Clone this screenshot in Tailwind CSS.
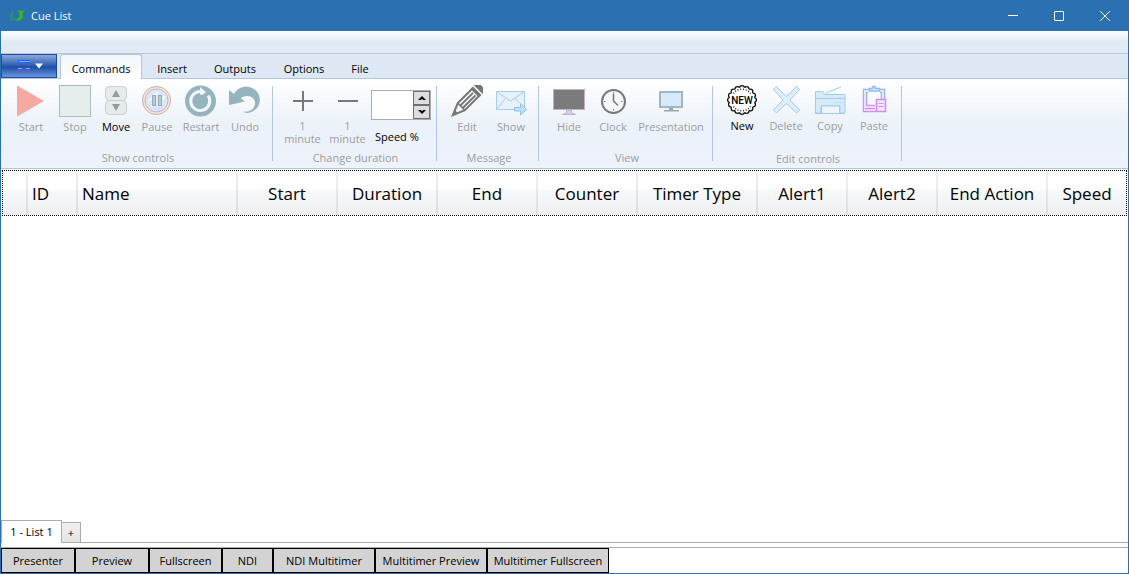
<!DOCTYPE html>
<html lang="en">
<head>
    <meta charset="UTF-8">
    <meta name="viewport" content="width=device-width, initial-scale=1.0">
    <title>Cue List</title>
    <script src="https://cdn.jsdelivr.net/npm/@tailwindcss/browser@4"></script>
</head>
<body class="flex min-h-screen flex-col border-x border-b border-[#2b70b1] bg-white font-['Open_Sans',sans-serif] text-[11px] leading-4 text-black">

<!-- Title bar -->
<header class="-mx-px flex h-[31px] items-center bg-[#2b70b1] pl-2 text-white">
    <svg class="h-4 w-4" viewBox="0 0 16 16"><path d="M4.500 2.500Q.5 7 3 12.500h5v-2H5Q3.500 7 6 3z" fill="#2e9070"/><path d="M9 2.500h7l-1.500 4 .5 3-3.500 3H8l1.500-2.500 2-1.500-.5-4z" fill="#35b81c"/></svg>
    <h1 class="ml-[7px] flex-1">Cue List</h1>
    <button class="flex h-full w-[46px] items-center justify-center" aria-label="Minimize"><svg class="h-3 w-3" viewBox="0 0 12 12"><path d="M1 5.500h10" stroke="#fff"/></svg></button>
    <button class="flex h-full w-[46px] items-center justify-center" aria-label="Maximize"><svg class="h-3 w-3" viewBox="0 0 12 12"><rect x="1.500" y="1.500" width="9" height="9" rx=".5" fill="none" stroke="#fff"/></svg></button>
    <button class="mr-px flex h-full w-[46px] items-center justify-center" aria-label="Close"><svg class="h-3 w-3" viewBox="0 0 12 12"><path d="M1 1l10 10M11 1L1 11" stroke="#fff"/></svg></button>
</header>

<div class="h-[23px] border-b border-[#b3c6dd] bg-linear-to-b from-white via-[#e1eaf5] to-[#e3e9f5]"></div>

<!-- Ribbon tabs -->
<nav class="flex h-[25px] items-end border-b border-[#b3c6dd] bg-[#dde8f4]">
    <button class="mr-[3px] flex h-6 w-14 items-center justify-center gap-1 self-start border border-[#1a4ba6] bg-linear-to-b from-[#8ea8dc] via-[#1c50a8] via-55% to-[#6b96dd]" aria-label="Application menu">
        <svg class="h-4 w-4" viewBox="0 0 16 16" fill="none"><path d="M3 3.500h12" stroke="#1d62f5" stroke-width="3"/><path d="M4 3.500h11M3 10.500h4m4 0h4" stroke="#75b5ff"/><path d="M2 6.500h2M13 6.500h2M2 12.500h5m3 0h5M7 10l2 3 2-3" stroke="#834bd3"/></svg>
        <svg class="h-2 w-2" viewBox="0 0 8 8"><path d="M0 1.500h8l-4 5z" fill="#fff"/></svg>
    </button>
    <button class="-mb-px h-[25px] w-[82px] rounded-t-[3px] border border-b-0 border-[#b3c6dd] bg-linear-to-b from-[#f2f7fc] to-white pt-1">Commands</button>
    <button class="h-[22px] w-[60px] pt-1">Insert</button>
    <button class="h-[22px] w-[66px] pt-1">Outputs</button>
    <button class="h-[22px] w-[72px] pt-1">Options</button>
    <button class="h-[22px] w-10 pt-1">File</button>
</nav>

<!-- Ribbon -->
<div class="flex h-[90px] border-b border-[#b3c6dd] bg-linear-to-b from-white via-[#ecf2f9] via-50% to-[#edf2fb] pt-1.5 text-[#9d9d9d]">

    <section class="relative flex flex-col justify-between pr-[6px] pl-2 after:absolute after:top-px after:right-0 after:h-[75px] after:w-px after:bg-[#b3c6dd]">
        <div class="flex items-start">
            <button class="flex w-11 flex-col items-center gap-0.5" disabled>
                <svg class="h-8 w-8" viewBox="0 0 32 32"><path d="M2 .5v31L29 16z" fill="#f6a9a1"/></svg>
                <span>Start</span>
            </button>
            <button class="flex w-11 flex-col items-center gap-0.5" disabled>
                <svg class="h-8 w-8" viewBox="0 0 32 32"><rect x=".5" y=".5" width="31" height="31" fill="#e5eeec" stroke="#acbdbf"/></svg>
                <span>Stop</span>
            </button>
            <button class="flex w-[38px] flex-col items-center gap-0.5 text-black">
                <svg class="h-8 w-8" viewBox="0 0 32 32"><g fill="#e5ecea" stroke="#c3cfd1"><rect x="5.500" y="1.500" width="21" height="14" rx="4"/><rect x="5.500" y="15.500" width="21" height="14" rx="4"/></g><path d="M12 12l4-7 4 7zM12 19h8l-4 7z" fill="#999"/></svg>
                <span>Move</span>
            </button>
            <button class="flex w-11 flex-col items-center gap-0.5" disabled>
                <svg class="h-8 w-8" viewBox="0 0 32 32"><circle cx="15.500" cy="15.500" r="14" fill="#fbe8ca" stroke="#c8abb7"/><circle cx="15.500" cy="15.500" r="11.500" fill="#d8eafa" stroke="#c3b1cb"/><path d="M8 16L17 7M10 22l3-3M21 14l3-3" stroke="#f4faff" stroke-width="2"/><path d="M8 20a9 9 0 0 0 15 0" fill="none" stroke="#bdaac9" stroke-dasharray="1 2.500"/><g fill="#aad6c7" stroke="#aaa1bd"><rect x="11.500" y="10.500" width="3" height="10"/><rect x="17.500" y="10.500" width="3" height="10"/></g></svg>
                <span>Pause</span>
            </button>
            <button class="flex w-11 flex-col items-center gap-0.5" disabled>
                <svg class="h-8 w-8" viewBox="0 0 32 32"><circle cx="15.500" cy="16" r="15.500" fill="#96b4be"/><path d="M23 10.500A9.500 9.500 0 1 1 15 6.500" fill="none" stroke="#f3f7fb" stroke-width="3"/><path d="M15 2l6 5-6 5.500z" fill="#f3f7fb"/><circle cx="15.500" cy="16.500" r="7" fill="#96b4be"/></svg>
                <span>Restart</span>
            </button>
            <button class="flex w-11 flex-col items-center gap-0.5" disabled>
                <svg class="h-8 w-8" viewBox="0 0 32 32"><path d="M0 5l5 4C9 2 17 0 24 3.500c9 5 9 17 1 22-4 3-9 3-11 1 6 1 11-2 12-7 1-6-5-10-11-8-2 .5-3 1.500-3 2l4 3L0 20z" fill="#96b4be"/></svg>
                <span>Undo</span>
            </button>
        </div>
        <h2 class="mb-0.5 text-center">Show controls</h2>
    </section>

    <section class="relative flex flex-col justify-between pr-[6px] pl-[7px] after:absolute after:top-px after:right-0 after:h-[75px] after:w-px after:bg-[#b3c6dd]">
        <div class="flex items-start">
            <button class="flex w-[45px] flex-col items-center gap-0.5" disabled>
                <svg class="h-8 w-8" viewBox="0 0 32 32"><path d="M6 16h20M16 6v20" stroke="#787878" stroke-width="2"/></svg>
                <span class="leading-[13px]">1<br>minute</span>
            </button>
            <button class="flex w-[45px] flex-col items-center gap-0.5" disabled>
                <svg class="h-8 w-8" viewBox="0 0 32 32"><path d="M6 16h20" stroke="#787878" stroke-width="2"/></svg>
                <span class="leading-[13px]">1<br>minute</span>
            </button>
            <div class="flex w-[61px] flex-col items-end pt-[5px] text-black">
                <div class="flex h-[30px] w-[60px] border border-[#abadb3] bg-white">
                    <input id="speed" type="text" class="min-w-0 flex-1 px-1 outline-none">
                    <div class="flex w-[17px] flex-col">
                        <button class="flex flex-1 items-center justify-center border border-[#707070] bg-[#ddd]" aria-label="Increase speed"><svg class="h-2 w-2" viewBox="0 0 8 8"><path d="M0 6l4-4 4 4H5.500L4 5 2.500 6z"/></svg></button>
                        <button class="flex flex-1 items-center justify-center border border-[#707070] bg-[#ddd]" aria-label="Decrease speed"><svg class="h-2 w-2" viewBox="0 0 8 8"><path d="M0 2l4 4 4-4H5.500L4 3 2.500 2z"/></svg></button>
                    </div>
                </div>
                <label for="speed" class="mt-[9px] w-[60px] pl-1">Speed %</label>
            </div>
        </div>
        <h2 class="mb-0.5 text-center">Change duration</h2>
    </section>

    <section class="relative flex flex-col justify-between pr-[6px] pl-2 after:absolute after:top-px after:right-0 after:h-[75px] after:w-px after:bg-[#b3c6dd]">
        <div class="flex items-start">
            <button class="flex w-11 flex-col items-center gap-0.5" disabled>
                <svg class="h-8 w-8" viewBox="0 0 32 32"><g transform="rotate(45 16 16)"><path d="M11 4h10v20l-5 12-5-12z" fill="#f3f6fa" stroke="#767676" stroke-width="2"/><path d="M14.500 6v18M18 6v18" stroke="#767676" stroke-width="2"/><path d="M11 24h10" fill="none" stroke="#767676" stroke-width="1.500"/><path d="M10 1.500h12V4H10zM14 31h4l-2 5zM10 0v-2q0-3 3-3h6q3 0 3 3v2z" fill="#767676"/></g></svg>
                <span>Edit</span>
            </button>
            <button class="flex w-11 flex-col items-center gap-0.5" disabled>
                <svg class="h-8 w-8" viewBox="0 0 32 32"><path d="M1.500 6.500h28v18h-28z" fill="#e6f1fb" stroke="#a6cce7"/><path d="M2 7l13.500 9L29 7M2 24l8-10M20 13l4 5" fill="none" stroke="#a6cce7"/><path d="M19.500 22.500h6v-4l6 6-6 5.500v-4h-6z" fill="#bedff9" stroke="#91c2e6"/></svg>
                <span>Show</span>
            </button>
        </div>
        <h2 class="mb-0.5 text-center">Message</h2>
    </section>

    <section class="relative flex flex-col justify-between pr-[6px] pl-2 after:absolute after:top-px after:right-0 after:h-[75px] after:w-px after:bg-[#b3c6dd]">
        <div class="flex items-start">
            <button class="flex w-11 flex-col items-center gap-0.5" disabled>
                <svg class="h-8 w-8" viewBox="0 0 32 32"><rect x=".5" y="4.500" width="31" height="20" fill="#7b7b7b" stroke="#c1afcd"/><path d="M13.500 25h5v3l4 1.500h-13l4-1.500z" fill="#c8d9ed" stroke="#c1afcd"/></svg>
                <span>Hide</span>
            </button>
            <button class="flex w-11 flex-col items-center gap-0.5" disabled>
                <svg class="h-8 w-8" viewBox="0 0 32 32" fill="none" stroke="#777"><circle cx="16.500" cy="16.500" r="11.500" stroke-width="2" fill="#f5f8fb"/><path d="M16.500 9v7l4.500 4.500" stroke-width="1.500"/><path d="M16.500 7v1.500M16.500 24v1.500M7 16.500h1.500M24 16.500h1.500"/></svg>
                <span>Clock</span>
            </button>
            <button class="flex w-[72px] flex-col items-center gap-0.5" disabled>
                <svg class="h-8 w-8" viewBox="0 0 32 32"><rect x="5" y="7" width="22" height="15" fill="#d5eafb" stroke="#a4b5c0" stroke-width="2"/><path d="M14 23h4v2h6v1.500H9V25h5z" fill="#99a9b5"/></svg>
                <span>Presentation</span>
            </button>
        </div>
        <h2 class="mb-0.5 text-center">View</h2>
    </section>

    <section class="relative flex flex-col justify-between pr-[6px] pl-[7px] after:absolute after:top-px after:right-0 after:h-[75px] after:w-px after:bg-[#b3c6dd]">
        <div class="flex items-start">
            <button class="flex w-11 flex-col items-center gap-px text-black">
                <svg class="h-8 w-8" viewBox="0 0 32 32"><g fill="none" stroke-linecap="round"><circle cx="16" cy="15" r="12" stroke="#111" stroke-width="6" pathLength="16" stroke-dasharray="0 1"/><circle cx="16" cy="15" r="12" stroke="#fff" stroke-width="3.500" pathLength="16" stroke-dasharray="0 1"/></g><circle cx="16" cy="15" r="12.500" fill="#fff"/><path d="M7.500 8.500a10.500 10.500 0 0 1 17 0M7.500 21.500a10.500 10.500 0 0 0 17 0" fill="none" stroke="#222" stroke-width="1.500" stroke-dasharray="1 1.700"/><text x="16" y="18.500" text-anchor="middle" font-family="Roboto, sans-serif" font-size="10" font-weight="500">NEW</text></svg>
                <span>New</span>
            </button>
            <button class="flex w-11 flex-col items-center gap-px" disabled>
                <svg class="h-8 w-8" viewBox="0 0 32 32"><path d="M6.500 1.500l10 10 10-10 3 3-9.500 10.500 9.500 10-3 3-10-9.500-10 9.500-3-3 9.500-10L3.500 4.500z" fill="#deedfa" stroke="#a4cae6" stroke-linejoin="round"/></svg>
                <span>Delete</span>
            </button>
            <button class="flex w-11 flex-col items-center gap-px" disabled>
                <svg class="h-8 w-8" viewBox="0 0 32 32" stroke="#a3cbe7" fill="#d5eafb"><path d="M1.500 28V6.500h7l2 3h20.500V28h-5v-7H7v7z"/><path d="M1 13.500h30" fill="none"/><path d="M11 8.500L27 2"/><path d="M7.500 28v-7h18v7" fill="#edf6fd"/><path d="M1 28.500h30M22 17.500h1.500m2 0H27" fill="none"/></svg>
                <span>Copy</span>
            </button>
            <button class="flex w-11 flex-col items-center gap-px" disabled>
                <svg class="h-8 w-8" viewBox="0 0 32 32"><defs><linearGradient id="clip" x2="0" y2="1"><stop stop-color="#8ebafa"/><stop offset="1" stop-color="#d889f3"/></linearGradient></defs><g fill="none" stroke="url(#clip)" stroke-width="1.500"><path d="M11 4.500H5.500v22H18M22 4.500h4.500v10"/><path d="M10 7.500H8.500v13H17M22 7.500h1.500v7M7 23.500h10"/></g><path d="M11.500 6V3.500h3c0-3 3-3 3 0h4V6z" fill="#e5f0ff" stroke="#8ebafa" stroke-width="1.500"/><path d="M18.500 14.500h9v12h-9z" fill="#f2e7fb" stroke="#d28bee" stroke-width="1.500"/><path d="M20.500 18.500h5m-5 3h5" stroke="#c790ee"/></svg>
                <span>Paste</span>
            </button>
        </div>
        <h2 class="mb-px text-center">Edit controls</h2>
    </section>
</div>

<!-- Cue table -->
<main class="flex-1 px-px pt-px">
    <div class="border border-dotted border-black bg-linear-to-b from-white from-40% via-[#f7f8fa] via-45% to-[#eeeff1]">
        <table class="w-full table-fixed text-[17px] leading-6">
            <colgroup>
                <col class="w-6"><col class="w-[50px]"><col class="w-40"><col class="w-[100px]"><col class="w-[100px]"><col class="w-[100px]"><col class="w-[100px]"><col class="w-[120px]"><col class="w-[90px]"><col class="w-[90px]"><col class="w-[110px]"><col>
            </colgroup>
            <thead>
                <tr class="h-11 *:border-r-2 *:border-black/7 *:p-0 *:pt-0.5 *:font-normal *:last:border-r-0">
                    <th></th>
                    <th><span class="block pl-1 text-left">ID</span></th>
                    <th><span class="block pl-1 text-left">Name</span></th>
                    <th>Start</th>
                    <th>Duration</th>
                    <th>End</th>
                    <th>Counter</th>
                    <th>Timer Type</th>
                    <th>Alert1</th>
                    <th>Alert2</th>
                    <th>End Action</th>
                    <th>Speed</th>
                </tr>
            </thead>
        </table>
    </div>
</main>

<!-- List tabs -->
<div class="flex h-[23px] items-end border-b border-[#acacac]">
    <button class="-mb-px h-[23px] w-[61px] border border-b-0 border-[#acacac] bg-white">1 - List 1</button>
    <button class="h-5 w-[19px] border border-b-0 border-l-0 border-[#acacac] bg-linear-to-b from-[#f0f0f0] to-[#e5e5e5]" aria-label="Add list">+</button>
</div>
<div class="h-[5px] border-b border-[#acacac]"></div>

<footer class="flex h-[25px] *:border *:border-black *:bg-[#d3d3d3]">
    <button class="w-[74px]">Presenter</button>
    <button class="w-[74px]">Preview</button>
    <button class="w-[73px]">Fullscreen</button>
    <button class="w-[51px]">NDI</button>
    <button class="w-[102px]">NDI Multitimer</button>
    <button class="w-28">Multitimer Preview</button>
    <button class="w-[122px]">Multitimer Fullscreen</button>
</footer>
</body>
</html>
